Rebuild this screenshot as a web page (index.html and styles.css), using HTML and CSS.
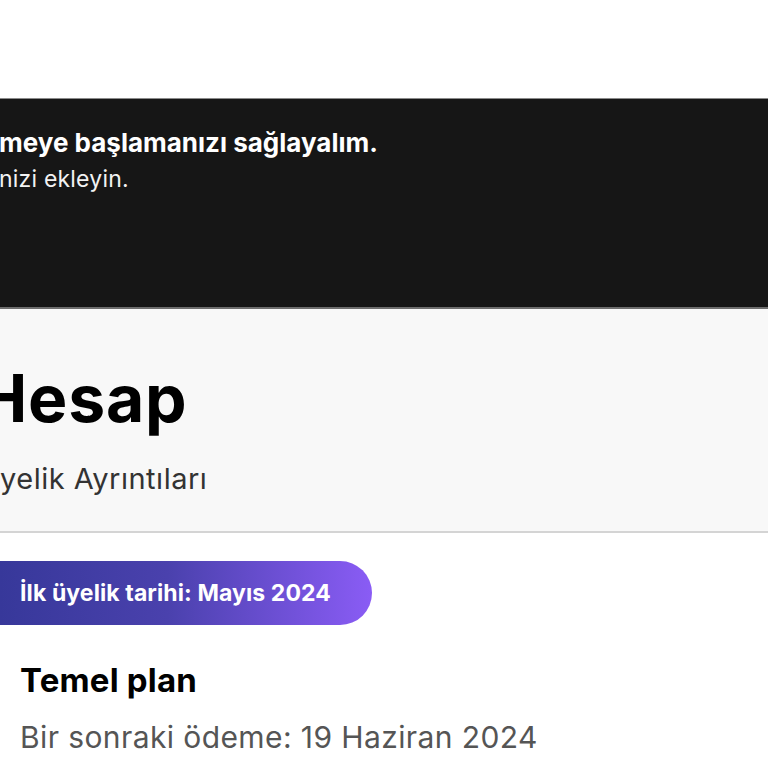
FILE: index.html
```html
<!DOCTYPE html>
<html lang="tr">
<head>
<meta charset="utf-8">
<title>Hesap</title>
<link rel="stylesheet" href="styles.css">
</head>
<body>
<div class="topbar"></div>
<section class="banner">
  <div class="banner-text">
    <p class="banner-title">meye başlamanızı sağlayalım.</p>
    <p class="banner-sub">nizi ekleyin.</p>
  </div>
</section>
<section class="account-head">
  <div class="head-inner">
    <h1 class="page-title">Hesap</h1>
    <p class="page-sub">yelik Ayrıntıları</p>
  </div>
</section>
<section class="membership">
  <div class="since-pill">İlk üyelik tarihi: Mayıs 2024</div>
  <div class="plan">
    <h2 class="plan-name">Temel plan</h2>
    <p class="plan-next">Bir sonraki ödeme: 19 Haziran 2024</p>
  </div>
</section>
</body>
</html>
```

FILE: styles.css
```css
* { box-sizing: border-box; }
html, body {
  margin: 0;
  padding: 0;
  overflow: hidden;
  background: #ffffff;
  font-family: Inter, "Noto Sans", "Liberation Sans", sans-serif;
}
.topbar {
  height: 98px;
  background: #ffffff;
}
.banner {
  height: 211px;
  background: #161616;
  border-top: 1px solid #8a8a8a;
  border-bottom: 2px solid #6e6e6e;
  padding-top: 29px;
  overflow: hidden;
}
.banner-text {
  white-space: nowrap;
}
.banner-title {
  margin: 0 0 0 -1px;
  color: #ffffff;
  font-size: 26px;
  font-weight: 700;
  line-height: 30px;
}
.banner-sub {
  margin: 5px 0 0 -1px;
  color: #f2f2f2;
  font-size: 23px;
  font-weight: 400;
  line-height: 32px;
  letter-spacing: 0.2px;
}
.account-head {
  height: 224px;
  background: #f8f8f8;
  border-bottom: 2px solid #d4d4d4;
  padding-top: 49px;
  overflow: hidden;
}
.head-inner {
  white-space: nowrap;
}
.page-title {
  margin: 0 0 0 -22px;
  font-size: 66px;
  font-weight: 700;
  line-height: 80px;
  color: #000000;
  letter-spacing: 0.8px;
}
.page-sub {
  margin: 23px 0 0;
  font-size: 29px;
  font-weight: 400;
  line-height: 36px;
  color: #333333;
  letter-spacing: 0.5px;
}
.membership {
  padding-top: 28px;
}
.since-pill {
  width: 372px;
  height: 64px;
  padding-left: 20px;
  display: flex;
  align-items: center;
  border-radius: 0 32px 32px 0;
  background: linear-gradient(90deg, #37389a 0%, #4a41ad 45%, #8a5cf5 100%);
  color: #ffffff;
  font-size: 23px;
  font-weight: 700;
  letter-spacing: 0.1px;
}
.plan {
  padding: 35px 20px 0;
}
.plan-name {
  margin: 0;
  font-size: 33px;
  font-weight: 700;
  line-height: 40px;
  color: #000000;
  letter-spacing: 0.2px;
}
.plan-next {
  margin: 19px 0 0;
  font-size: 30px;
  font-weight: 400;
  line-height: 36px;
  color: #555555;
  letter-spacing: 0.4px;
}
```
